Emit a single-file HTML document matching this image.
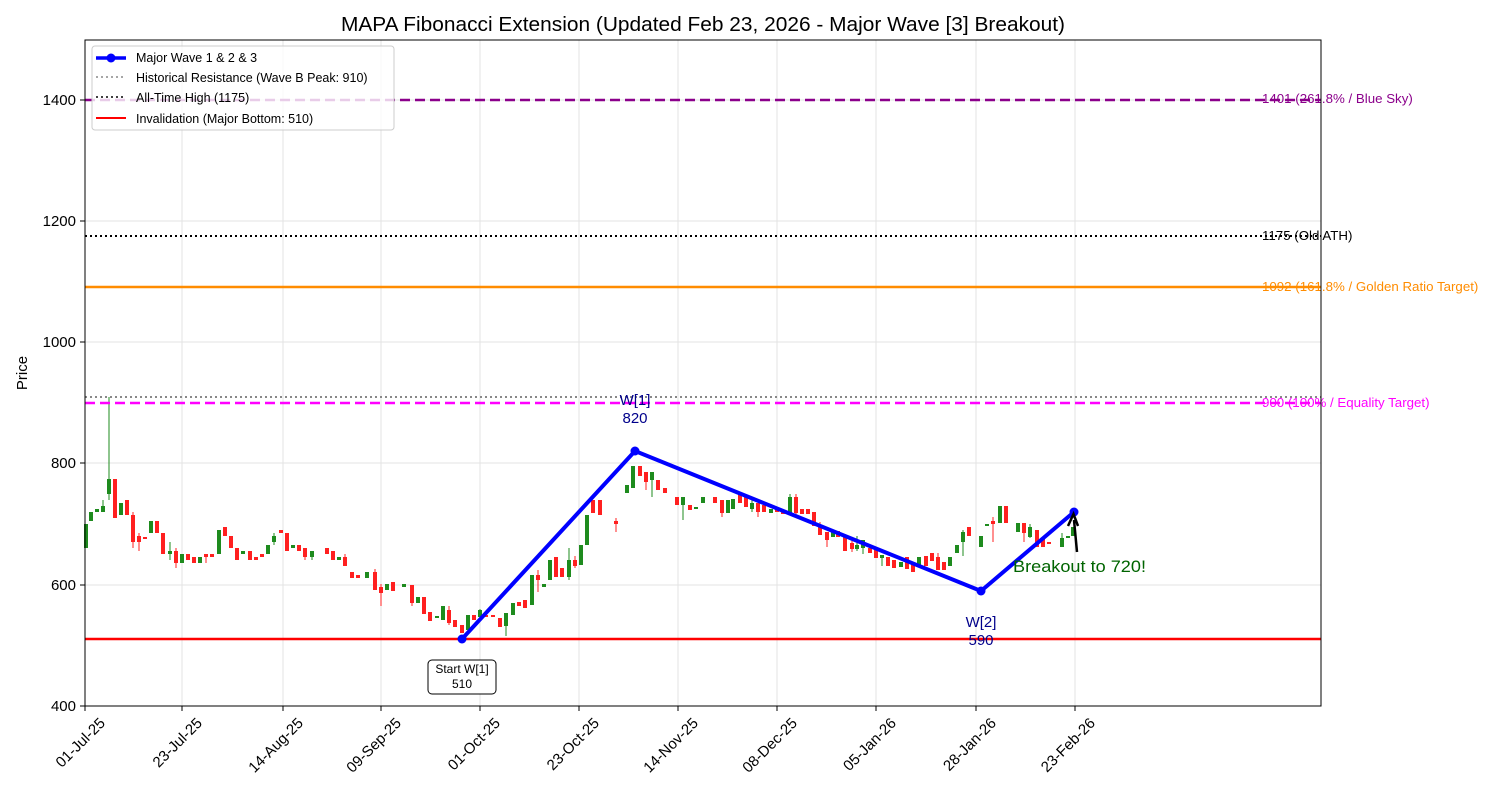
<!DOCTYPE html>
<html><head><meta charset="utf-8"><style>
html,body{margin:0;padding:0;background:#fff;}
svg{display:block;font-family:"Liberation Sans","DejaVu Sans",sans-serif;}
</style></head><body>
<svg id="s" width="1500" height="800" viewBox="0 0 1500 800" xmlns="http://www.w3.org/2000/svg">
<text x="703" y="31" font-size="20.5" text-anchor="middle" fill="#000" textLength="724" lengthAdjust="spacingAndGlyphs">MAPA Fibonacci Extension (Updated Feb 23, 2026 - Major Wave [3] Breakout)</text>
<g stroke="#e3e3e3" stroke-width="1">
<line x1="182" y1="40" x2="182" y2="706"/><line x1="283" y1="40" x2="283" y2="706"/><line x1="381" y1="40" x2="381" y2="706"/><line x1="480" y1="40" x2="480" y2="706"/><line x1="579" y1="40" x2="579" y2="706"/><line x1="678" y1="40" x2="678" y2="706"/><line x1="777" y1="40" x2="777" y2="706"/><line x1="876" y1="40" x2="876" y2="706"/><line x1="976" y1="40" x2="976" y2="706"/><line x1="1075" y1="40" x2="1075" y2="706"/>
<line x1="85" y1="585" x2="1321" y2="585"/><line x1="85" y1="463" x2="1321" y2="463"/><line x1="85" y1="342" x2="1321" y2="342"/><line x1="85" y1="221" x2="1321" y2="221"/><line x1="85" y1="100" x2="1321" y2="100"/>
</g>
<g id="candles"></g>
<line x1="85" y1="397" x2="1321" y2="397" stroke="#888" stroke-width="2" stroke-dasharray="2,3"/>
<line x1="85" y1="403" x2="1321" y2="403" stroke="#ff00ff" stroke-width="2.5" stroke-dasharray="10,5"/>
<line x1="85" y1="100" x2="1321" y2="100" stroke="#8b008b" stroke-width="2.5" stroke-dasharray="10,5"/>
<line x1="85" y1="236" x2="1321" y2="236" stroke="#000" stroke-width="2" stroke-dasharray="2,3"/>
<line x1="85" y1="287" x2="1321" y2="287" stroke="#ff8c00" stroke-width="2.5"/>
<line x1="85" y1="639" x2="1321" y2="639" stroke="#ff0000" stroke-width="2.5"/>
<polyline points="462,639 635,451 981,591 1074,512" fill="none" stroke="#0000ff" stroke-width="4" stroke-linejoin="round"/>
<g fill="#0000ff"><circle cx="462" cy="639" r="4.5"/><circle cx="635" cy="451" r="4.5"/><circle cx="981" cy="591" r="4.5"/><circle cx="1074" cy="512" r="4.5"/></g>
<g font-size="15" fill="#00008b" text-anchor="middle">
<text x="635" y="405">W[1]</text><text x="635" y="423">820</text>
<text x="981" y="627">W[2]</text><text x="981" y="645">590</text>
</g>
<rect x="428" y="660" width="68" height="34" rx="4" fill="#fff" stroke="#000" stroke-width="1"/>
<text x="462" y="673" font-size="12" text-anchor="middle">Start W[1]</text>
<text x="462" y="688" font-size="12" text-anchor="middle">510</text>
<text x="1013" y="572" font-size="17" fill="#006400" textLength="133" lengthAdjust="spacingAndGlyphs">Breakout to 720!</text>
<line x1="1077" y1="552" x2="1074" y2="520" stroke="#000" stroke-width="2.5"/>
<path d="M1068,526 L1073.5,514 L1078,526" fill="none" stroke="#000" stroke-width="2.5"/>
<g font-size="13.3">
<text x="1262" y="103" fill="#8b008b">1401 (261.8% / Blue Sky)</text>
<text x="1262" y="240" fill="#000">1175 (Old ATH)</text>
<text x="1262" y="291" fill="#ff8c00">1092 (161.8% / Golden Ratio Target)</text>
<text x="1262" y="407" fill="#ff00ff">900 (100% / Equality Target)</text>
</g>
<rect x="85" y="40" width="1236" height="666" fill="none" stroke="#000" stroke-width="1"/>
<g stroke="#000"><line x1="80" y1="706" x2="85" y2="706"/><line x1="80" y1="585" x2="85" y2="585"/><line x1="80" y1="463" x2="85" y2="463"/><line x1="80" y1="342" x2="85" y2="342"/><line x1="80" y1="221" x2="85" y2="221"/><line x1="80" y1="100" x2="85" y2="100"/></g>
<g font-size="15" text-anchor="end">
<text x="76" y="711">400</text><text x="76" y="590">600</text><text x="76" y="468">800</text><text x="76" y="347">1000</text><text x="76" y="226">1200</text><text x="76" y="105">1400</text>
</g>
<text transform="translate(27,373) rotate(-90)" font-size="15" text-anchor="middle">Price</text>
<g id="xt" font-size="15" text-anchor="end"></g>
<rect x="92" y="46" width="302" height="84" rx="3" fill="#fff" fill-opacity="0.8" stroke="#ccc"/>
<line x1="96" y1="58" x2="126" y2="58" stroke="#0000ff" stroke-width="3.5"/><circle cx="111" cy="58" r="4.5" fill="#0000ff"/>
<line x1="96" y1="77" x2="126" y2="77" stroke="#888" stroke-width="1.5" stroke-dasharray="2,3"/>
<line x1="96" y1="97" x2="126" y2="97" stroke="#000" stroke-width="1.5" stroke-dasharray="2,3"/>
<line x1="96" y1="118" x2="126" y2="118" stroke="#ff0000" stroke-width="2"/>
<g font-size="12.5">
<text x="136" y="62">Major Wave 1 &amp; 2 &amp; 3</text>
<text x="136" y="82">Historical Resistance (Wave B Peak: 910)</text>
<text x="136" y="102">All-Time High (1175)</text>
<text x="136" y="123">Invalidation (Major Bottom: 510)</text>
</g>
</svg>
<script>
var d=[[86,524,548,'g'],[91,512,521,'g'],[97,509,512,'g'],[103,506,512,'g',500],[109,479,494,'g',397,500],[115,479,518,'r'],[121,503,515,'g'],[127,500,515,'r'],[133,515,542,'r',512,548],[139,536,542,'r',533,551],[145,537,539,'r'],[151,521,533,'g'],[157,521,533,'r'],[163,533,554,'r'],[170,551,554,'g',542,560],[176,551,563,'r',548,568],[182,554,563,'g'],[188,554,560,'r'],[194,557,563,'r'],[200,557,563,'g'],[206,554,557,'r',554,563],[212,554,557,'r'],[219,530,554,'g'],[225,527,536,'r'],[231,536,548,'r'],[237,548,560,'r'],[243,551,554,'g'],[250,551,560,'r'],[256,557,560,'r'],[262,554,557,'r'],[268,545,554,'g'],[274,536,542,'g',533,545],[281,530,533,'r'],[287,533,551,'r'],[293,545,548,'g'],[299,545,551,'r'],[305,548,557,'r',548,560],[312,551,557,'g',551,560],[327,548,554,'r'],[333,551,560,'r'],[339,557,560,'g'],[345,557,566,'r',554,566],[352,572,578,'r'],[358,575,578,'r'],[367,572,578,'g'],[375,572,590,'r',569,590],[381,587,593,'r',584,606],[387,584,590,'g'],[393,582,591,'r'],[404,584,587,'g'],[412,585,603,'r',585,606],[418,597,603,'g'],[424,597,614,'r'],[430,612,621,'r'],[437,616,618,'g'],[443,606,620,'g'],[449,610,623,'r',606,625],[455,620,627,'r'],[462,625,633,'r'],[468,615,630,'g'],[474,615,620,'r'],[480,610,617,'g',609,620],[486,615,617,'r'],[493,615,617,'r'],[500,618,627,'r'],[506,613,626,'g',613,636],[513,603,615,'g'],[519,602,606,'r'],[525,600,608,'r'],[532,575,605,'g'],[538,575,580,'r',570,592],[544,584,587,'g'],[550,560,580,'g'],[556,557,577,'r'],[562,568,577,'r'],[569,560,577,'g',548,580],[575,560,566,'r',556,568],[581,545,565,'g'],[587,515,545,'g'],[593,500,513,'r'],[600,500,515,'r'],[616,521,524,'r',518,532],[627,485,493,'g'],[633,466,488,'g'],[640,466,476,'r'],[646,472,482,'r',472,490],[652,472,480,'g',472,497],[658,480,490,'r'],[665,488,493,'r'],[677,497,505,'r'],[683,497,505,'g',497,520],[690,505,510,'r'],[696,507,509,'g'],[703,497,503,'g'],[715,497,503,'r'],[722,500,513,'r',500,517],[728,500,513,'g'],[733,499,509,'g'],[740,494,503,'r'],[746,497,507,'r'],[752,503,509,'g',500,512],[758,503,512,'r',503,517],[764,505,512,'r'],[771,509,513,'g'],[777,509,512,'r'],[783,510,514,'r'],[790,497,513,'g',494,513],[796,497,513,'r',494,516],[802,509,514,'r'],[808,509,514,'r'],[814,512,526,'r'],[820,526,535,'r',522,535],[827,532,540,'r',532,547],[833,531,537,'g'],[838,531,537,'r'],[845,537,551,'r'],[852,543,549,'r',540,552],[857,545,549,'g',536,551],[863,540,548,'g',540,554],[870,548,553,'r'],[876,550,558,'r'],[882,555,558,'g',555,566],[888,557,566,'r'],[894,560,568,'r'],[901,562,567,'g'],[907,557,569,'r'],[913,563,572,'r'],[919,557,567,'g'],[926,556,566,'r'],[932,553,561,'r'],[938,557,570,'r',553,570],[944,562,570,'r'],[950,557,566,'g'],[957,545,553,'g',545,553],[963,532,542,'g',530,556],[969,527,536,'r'],[981,536,547,'g'],[987,524,526,'g'],[993,521,524,'r',517,542],[1000,506,523,'g'],[1006,506,523,'r'],[1018,523,532,'g'],[1024,523,533,'r',523,542],[1030,527,537,'g',524,538],[1037,530,547,'r'],[1043,538,547,'r'],[1049,542,544,'r'],[1062,538,547,'g',533,547],[1068,536,538,'g'],[1073,527,536,'g']];
var g=document.getElementById('candles'),h='';
d.forEach(function(c){var col=c[3]=='g'?'#1e8b1e':'#ff2020';var hi=c[4]||c[1],lo=c[5]||c[2];
if(hi<c[1]||lo>c[2])h+='<line x1="'+c[0]+'" x2="'+c[0]+'" y1="'+hi+'" y2="'+lo+'" stroke="'+col+'" stroke-width="1"/>';
h+='<rect x="'+(c[0]-2)+'" y="'+c[1]+'" width="4" height="'+Math.max(2,c[2]-c[1])+'" fill="'+col+'"/>';});
g.innerHTML=h;
var xt=[[85,'01-Jul-25'],[182,'23-Jul-25'],[283,'14-Aug-25'],[381,'09-Sep-25'],[480,'01-Oct-25'],[579,'23-Oct-25'],[678,'14-Nov-25'],[777,'08-Dec-25'],[876,'05-Jan-26'],[976,'28-Jan-26'],[1075,'23-Feb-26']],s='';
xt.forEach(function(t){s+='<line x1="'+t[0]+'" x2="'+t[0]+'" y1="706" y2="711" stroke="#000"/><text transform="translate('+(t[0]+21)+',724) rotate(-45)">'+t[1]+'</text>';});
document.getElementById('xt').innerHTML=s;
</script>
</body></html>
